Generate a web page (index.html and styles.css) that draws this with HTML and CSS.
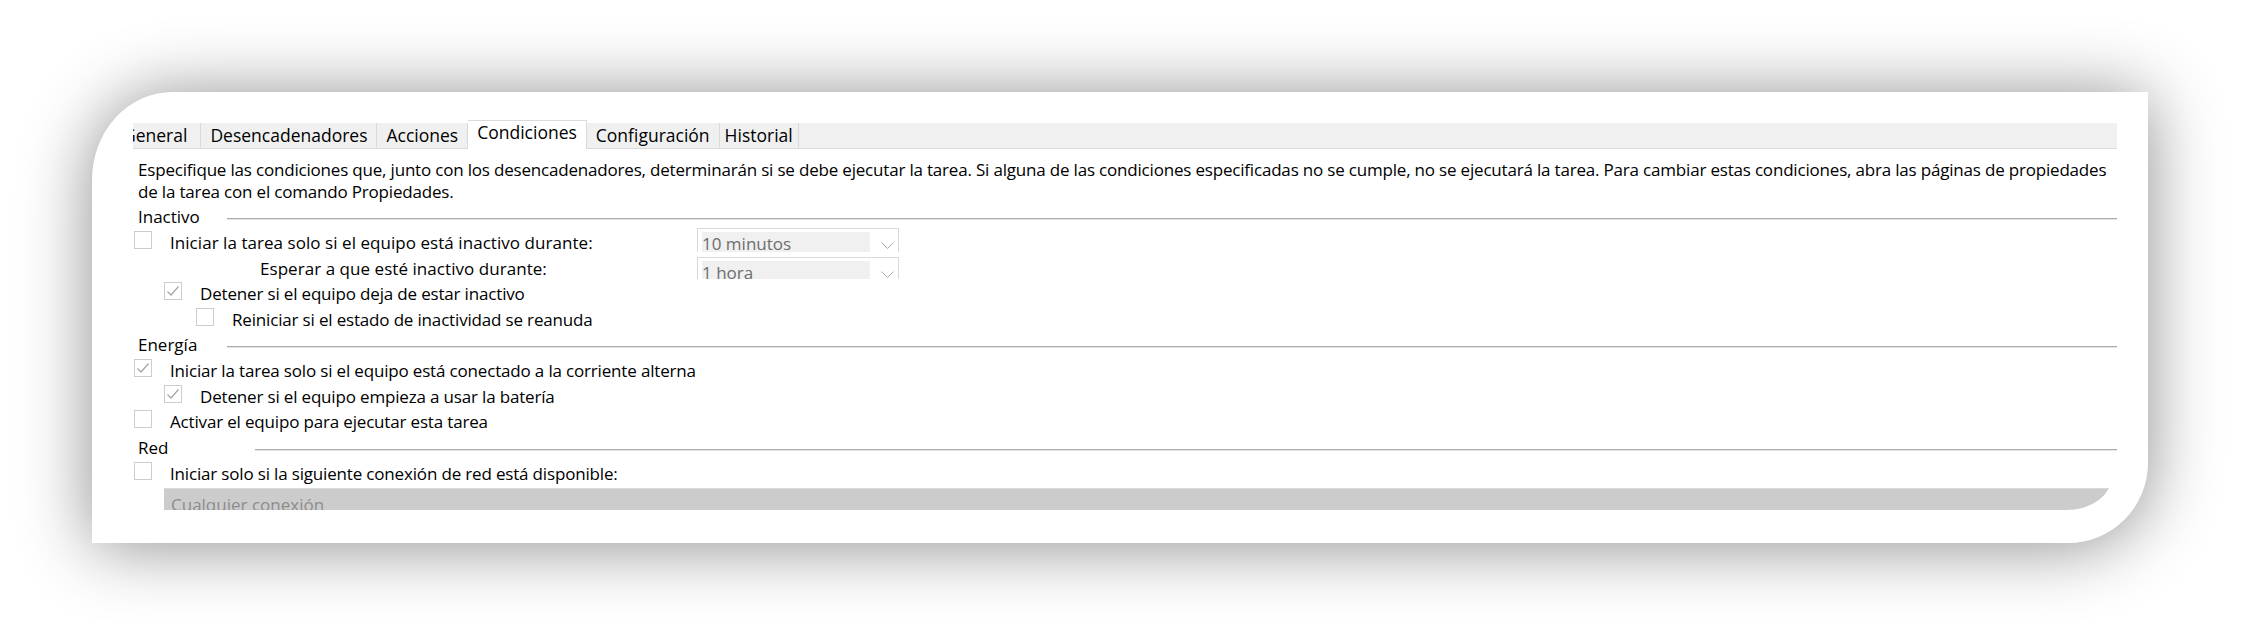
FILE: index.html
```html
<!DOCTYPE html>
<html lang="es">
<head>
<meta charset="utf-8">
<title>Condiciones</title>
<link rel="stylesheet" href="styles.css">
</head>
<body>
<div class="stage">
  <div class="card">
    <div class="tabs">
      <div class="tab tab-first">General</div>
      <div class="tab">Desencadenadores</div>
      <div class="tab">Acciones</div>
      <div class="tab tab-active">Condiciones</div>
      <div class="tab">Configuración</div>
      <div class="tab tab-last">Historial</div>
    </div>

    <p class="desc">Especifique las condiciones que, junto con los desencadenadores, determinarán si se debe ejecutar la tarea. Si alguna de las condiciones especificadas no se cumple, no se ejecutará la tarea. Para cambiar estas condiciones, abra las páginas de propiedades<br>de la tarea con el comando Propiedades.</p>

    <div class="group-head"><span class="group-label">Inactivo</span><span class="rule"></span></div>

    <div class="row">
      <div class="cell-main">
        <span class="cb"></span><span class="label label-wide">Iniciar la tarea solo si el equipo está inactivo durante:</span>
      </div>
      <div class="combo">
        <span class="combo-field">10 minutos</span>
        <svg class="chev" width="13" height="7" viewBox="0 0 13 7"><path d="M0.5 0.5 L6.5 6.5 L12.5 0.5" fill="none" stroke="#a8a8a8" stroke-width="1"/></svg>
      </div>
    </div>

    <div class="row">
      <div class="cell-main cell-indent">
        <span class="label label-wide">Esperar a que esté inactivo durante:</span>
      </div>
      <div class="combo combo-short">
        <span class="combo-field">1 hora</span>
        <svg class="chev" width="13" height="7" viewBox="0 0 13 7"><path d="M0.5 0.5 L6.5 6.5 L12.5 0.5" fill="none" stroke="#a8a8a8" stroke-width="1"/></svg>
      </div>
    </div>

    <div class="row lvl1">
      <span class="cb"><svg width="16" height="16" viewBox="0 0 16 16"><path d="M2.5 8.5 L6 12 L13.5 3.5" fill="none" stroke="#a4a4a4" stroke-width="1.2"/></svg></span><span class="label">Detener si el equipo deja de estar inactivo</span>
    </div>

    <div class="row lvl2">
      <span class="cb"></span><span class="label">Reiniciar si el estado de inactividad se reanuda</span>
    </div>

    <div class="group-head"><span class="group-label">Energía</span><span class="rule"></span></div>

    <div class="row">
      <span class="cb"><svg width="16" height="16" viewBox="0 0 16 16"><path d="M2.5 8.5 L6 12 L13.5 3.5" fill="none" stroke="#a4a4a4" stroke-width="1.2"/></svg></span><span class="label">Iniciar la tarea solo si el equipo está conectado a la corriente alterna</span>
    </div>

    <div class="row lvl1">
      <span class="cb"><svg width="16" height="16" viewBox="0 0 16 16"><path d="M2.5 8.5 L6 12 L13.5 3.5" fill="none" stroke="#a4a4a4" stroke-width="1.2"/></svg></span><span class="label">Detener si el equipo empieza a usar la batería</span>
    </div>

    <div class="row">
      <span class="cb"></span><span class="label">Activar el equipo para ejecutar esta tarea</span>
    </div>

    <div class="group-head"><span class="group-label group-label-wide">Red</span><span class="rule"></span></div>

    <div class="row">
      <span class="cb"></span><span class="label">Iniciar solo si la siguiente conexión de red está disponible:</span>
    </div>

    <div class="net">
      <div class="net-band">Cualquier conexión</div>
    </div>
  </div>
</div>
</body>
</html>
```

FILE: styles.css
```css
html, body {
  margin: 0;
  padding: 0;
}

body {
  width: 2241px;
  height: 635px;
  overflow: hidden;
  background: #ffffff;
  font-family: "Open Sans", "Noto Sans", sans-serif;
  font-size: 17px;
  color: #000000;
}

.stage {
  padding: 92px 0 0 92px;
}

.card {
  width: 2056px;
  height: 451px;
  box-sizing: border-box;
  background: #ffffff;
  border-radius: 80px 0 80px 0 / 88px 0 80px 0;
  box-shadow: 0 3px 70px rgba(0, 0, 0, 0.45);
  padding: 31px 31px 0 41px;
  overflow: hidden;
}

/* Tabs */
.tabs {
  display: flex;
  height: 25px;
  background: #f0f0f0;
  border-bottom: 1px solid #dadada;
  overflow-x: clip;
  overflow-y: visible;
  font-size: 17.5px;
}

.tab {
  flex: none;
  padding: 0 9px;
  line-height: 25px;
  border-right: 1px solid #dadada;
  white-space: nowrap;
}

.tab-first {
  margin-left: -19px;
  padding-right: 13px;
}

.tab-last {
  padding: 0 5px;
}

.tab-active {
  background: #ffffff;
  margin-top: -3px;
  height: 29px;
  box-sizing: border-box;
  line-height: 22px;
  border-top: 1px solid #dadada;
}

/* Description */
.desc {
  margin: 10px 0 0;
  padding-left: 5px;
  line-height: 22px;
  letter-spacing: -0.19px;
  white-space: nowrap;
}

/* Group headings */
.group-head {
  display: flex;
  height: 26px;
  line-height: 27px;
  padding-left: 5px;
}

.group-label {
  flex: none;
  width: 89px;
}

.group-label-wide {
  width: 117px;
}

.rule {
  flex: 1;
  height: 0;
  margin-top: 15px;
  border-top: 1px solid #ababab;
  border-bottom: 1px solid #e4e4e4;
}

/* Rows */
.row {
  display: flex;
  align-items: flex-start;
  height: 25.5px;
  line-height: 27px;
  white-space: nowrap;
}

.label {
  letter-spacing: -0.17px;
}

.label-wide {
  letter-spacing: 0.05px;
}

.lvl1 {
  padding-left: 30px;
}

.lvl2 {
  padding-left: 62px;
}

.cell-main {
  display: flex;
  align-items: flex-start;
  flex: none;
  width: 564px;
}

.cell-indent {
  padding-left: 127px;
  box-sizing: border-box;
}

.cb {
  flex: none;
  width: 18px;
  height: 18px;
  box-sizing: border-box;
  border: 1px solid #cdcdcd;
  background: #ffffff;
  margin: 2px 18px 0 1px;
  display: flex;
}

.cb svg {
  display: block;
}

/* Combo boxes */
.combo {
  flex: none;
  display: flex;
  align-items: flex-start;
  width: 202px;
  height: 24px;
  margin-top: -1px;
  box-sizing: border-box;
  padding: 3px 0 0 4px;
  border: 1px solid #d9d9d9;
  border-bottom: none;
  overflow: hidden;
}

.combo-short {
  height: 22px;
  margin-top: 2px;
}

.combo-field {
  flex: none;
  width: 168px;
  height: 30px;
  background: #f0f0f0;
  color: #6d6d6d;
  line-height: 23px;
}

.chev {
  flex: none;
  display: block;
  margin: 10px 0 0 11px;
}

/* Network connection band */
.net {
  margin: 3px 5px 0 31px;
  height: 22px;
  overflow: hidden;
}

.net-band {
  height: 34px;
  margin-top: -12px;
  box-sizing: border-box;
  padding: 18px 0 0 7px;
  border-bottom-right-radius: 45px 34px;
  background: linear-gradient(#dadada, #dadada) 0 12px / 100% 1px no-repeat, #cccccc;
  color: #8c8c8c;
  line-height: 22px;
  white-space: nowrap;
}
```
